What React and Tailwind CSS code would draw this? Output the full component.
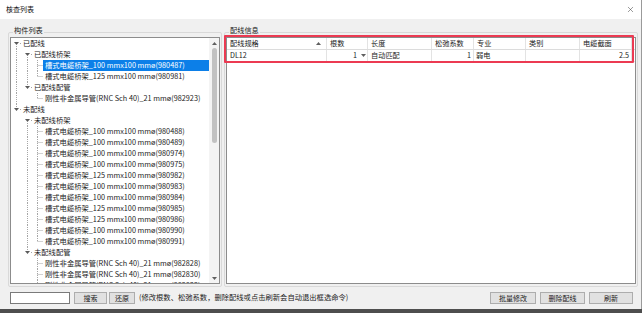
import { X } from "lucide-react";

const FONT = "font-['Noto_Sans_CJK_SC','Noto_Sans',sans-serif]";

const CELL_W = [10, 11, 11];
const LINE_X = [5.5, 6.5, 5.5];

const tray = (size, id) => `槽式电缆桥架_${size} mmx100 mmø(${id})`;
const pipe = (id) => `刚性非金属导管(RNC Sch 40)_21 mmø(${id})`;

const TREE = [
	{ g: ["AD"], text: "已配线" },
	{ g: ["|", "AD"], text: "已配线桥架" },
	{ g: ["|", "|", "T"], text: tray(100, "980487"), selected: true },
	{ g: ["|", "|", "L"], text: tray(125, "980981") },
	{ g: ["|", "AU"], text: "已配线配管" },
	{ g: ["|", " ", "L"], text: pipe("982923") },
	{ g: ["AU"], text: "未配线" },
	{ g: [" ", "AD"], text: "未配线桥架" },
	{ g: [" ", "|", "T"], text: tray(100, "980488") },
	{ g: [" ", "|", "T"], text: tray(100, "980489") },
	{ g: [" ", "|", "T"], text: tray(100, "980974") },
	{ g: [" ", "|", "T"], text: tray(100, "980975") },
	{ g: [" ", "|", "T"], text: tray(125, "980982") },
	{ g: [" ", "|", "T"], text: tray(100, "980983") },
	{ g: [" ", "|", "T"], text: tray(100, "980984") },
	{ g: [" ", "|", "T"], text: tray(125, "980985") },
	{ g: [" ", "|", "T"], text: tray(125, "980986") },
	{ g: [" ", "|", "T"], text: tray(100, "980990") },
	{ g: [" ", "|", "L"], text: tray(100, "980991") },
	{ g: [" ", "AU"], text: "未配线配管" },
	{ g: [" ", " ", "T"], text: pipe("982828") },
	{ g: [" ", " ", "T"], text: pipe("982830") },
	{ g: [" ", " ", "T"], text: pipe("982832") },
];

const COLUMNS = [
	{ w: "w-[100px]", label: "配线规格", sort: true },
	{ w: "w-[41px]", label: "根数" },
	{ w: "w-[64px]", label: "长度" },
	{ w: "w-[42px]", label: "松弛系数" },
	{ w: "w-[52px]", label: "专业" },
	{ w: "w-[54px]", label: "类别" },
	{ w: "w-[52px]", label: "电缆截面" },
];

// one column of the tree's dotted guide lines
function Guide({ code, col }) {
	const w = CELL_W[col];
	const cx = LINE_X[col];
	const s = { stroke: "#a6a6a6", strokeWidth: 1, strokeDasharray: "1 1" };
	const arrow = code.startsWith("A");

	return (
		<svg width={w} height="11" viewBox={`0 0 ${w} 11`} className="shrink-0">
			{code === "|" && <line x1={cx} y1="0" x2={cx} y2="11" {...s} />}
			{code === "T" && (
				<>
					<line x1={cx} y1="0" x2={cx} y2="11" {...s} />
					<line x1={cx} y1="5.5" x2={w} y2="5.5" {...s} />
				</>
			)}
			{code === "L" && (
				<>
					<line x1={cx} y1="0" x2={cx} y2="5.5" {...s} />
					<line x1={cx} y1="5.5" x2={w} y2="5.5" {...s} />
				</>
			)}
			{arrow && (
				<>
					<polygon
						points={`${cx - 2.5},4 ${cx + 2.5},4 ${cx},7`}
						fill="#5a5a5a"
					/>
					<line x1={cx + 3.5} y1="5.5" x2={w} y2="5.5" {...s} />
				</>
			)}
			{code.includes("U") && <line x1={cx} y1="0" x2={cx} y2="3" {...s} />}
			{code.includes("D") && <line x1={cx} y1="8" x2={cx} y2="11" {...s} />}
		</svg>
	);
}

function TinyArrow({ up }) {
	return (
		<svg width="5" height="3" viewBox="0 0 5 3">
			<polygon
				points={up ? "0,3 5,3 2.5,0" : "0,0 5,0 2.5,3"}
				fill="#606060"
			/>
		</svg>
	);
}

function Btn({ children, w }) {
	return (
		<div
			className={`${w} h-[12px] flex items-center justify-center bg-[#e1e1e1] border border-[#adadad] text-[7px] leading-none text-[#222]`}>
			{children}
		</div>
	);
}

function Group({ label, w, children }) {
	return (
		<div
			className={`${w} mt-[13px] h-[255px] flex flex-col border border-[#d9d9d9] rounded-[2px] px-[1px] pb-[2px]`}>
			<div className="-mt-[8px] h-[10px] flex">
				<span className="ml-[3px] px-[1px] bg-[#f0f0f0] text-[7.2px] leading-[10px] text-[#222]">
					{label}
				</span>
			</div>
			<div className="mt-[2px] flex-1 min-h-0 relative">{children}</div>
		</div>
	);
}

function Tree() {
	return (
		<div className="h-full flex bg-white border border-[#8c8c8c]">
			<div className="flex-1 min-w-0 overflow-hidden">
				{TREE.map((row, i) => (
					<div key={i} className="h-[11px] flex items-center">
						{row.g.map((code, c) => (
							<Guide key={c} code={code} col={c} />
						))}
						<span
							className={`px-[2px] text-[7.3px] leading-[11px] whitespace-nowrap ${
								row.selected
									? "flex-1 bg-[#0c7fe8] text-white"
									: "text-[#1c1c1c]"
							}`}>
							{row.text}
						</span>
					</div>
				))}
			</div>

			{/* scrollbar */}
			<div className="w-[10px] shrink-0 flex flex-col bg-[#f4f4f4]">
				<div className="h-[10px] flex items-center justify-center">
					<TinyArrow up />
				</div>
				<div className="flex-1 flex justify-center">
					<div className="w-[5px] h-[95px] rounded-full bg-[#c2c2c2]" />
				</div>
				<div className="h-[10px] flex items-center justify-center">
					<TinyArrow />
				</div>
			</div>
		</div>
	);
}

function WiringTable() {
	const cell = "h-[11px] flex items-center border-r border-[#e3e3e3] text-[7.2px] leading-none text-[#222]";
	return (
		<div className="h-full bg-white border border-[#8c8c8c]">
			{/* header */}
			<div className="flex border-b border-[#dcdcdc]">
				{COLUMNS.map((col) => (
					<div
						key={col.label}
						className={`${cell} ${col.w} pl-[3px] pr-[5px] justify-between`}>
						<span>{col.label}</span>
						{col.sort && <TinyArrow up />}
					</div>
				))}
			</div>
			{/* row */}
			<div className="flex border-b border-[#e3e3e3]">
				<div className={`${cell} w-[100px] pl-[3px]`}>DL12</div>
				<div className={`${cell} w-[41px] justify-end gap-[4px] pr-[1px]`}>
					<span>1</span>
					<TinyArrow />
				</div>
				<div className={`${cell} w-[64px] pl-[3px]`}>自动匹配</div>
				<div className={`${cell} w-[42px] justify-end pr-[2px]`}>1</div>
				<div className={`${cell} w-[52px] pl-[2px]`}>弱电</div>
				<div className={`${cell} w-[54px]`} />
				<div className={`${cell} w-[52px] justify-end pr-[2px]`}>2.5</div>
			</div>
		</div>
	);
}

export default function App() {
	return (
		<div className={`w-[642px] h-[313px] flex flex-col bg-[#4e4e4e] ${FONT}`}>
			<div className="h-[309px] flex flex-col bg-[#f0f0f0] border-r border-[#9a9a9a]">
				{/* Title bar */}
				<div className="h-[19px] shrink-0 flex items-center justify-between bg-white pl-[6px] pr-[6px]">
					<span className="text-[7px] leading-none text-[#111]">核查列表</span>
					<X size={9} strokeWidth={1.3} color="#333" />
				</div>

				{/* Groups */}
				<div className="h-[268px] flex gap-[2px] pl-[8px]">
					<Group label="构件列表" w="w-[214px]">
						<Tree />
					</Group>
					<Group label="配线信息" w="w-[414px]">
						<WiringTable />
						{/* red highlight round the table */}
						<div className="absolute -left-[2px] -top-[2px] w-[410px] h-[28px] border-2 border-[#ec3a52] rounded-[1px]" />
					</Group>
				</div>

				{/* Bottom bar */}
				<div className="flex-1 flex items-center pl-[10px] pr-[8px]">
					<div className="w-[60px] h-[12px] bg-white border border-[#7a7a7a]" />
					<div className="ml-[4px]">
						<Btn w="w-[33px]">搜索</Btn>
					</div>
					<div className="ml-[2px]">
						<Btn w="w-[26px]">还原</Btn>
					</div>
					<span className="ml-[4px] text-[7.3px] leading-none text-[#222] whitespace-nowrap">
						(修改根数、松弛系数，删除配线或点击刷新会自动退出框选命令)
					</span>
					<div className="ml-auto flex gap-[4px]">
						<Btn w="w-[46px]">批量修改</Btn>
						<Btn w="w-[45px]">删除配线</Btn>
						<Btn w="w-[44px]">刷新</Btn>
					</div>
				</div>
			</div>
		</div>
	);
}
